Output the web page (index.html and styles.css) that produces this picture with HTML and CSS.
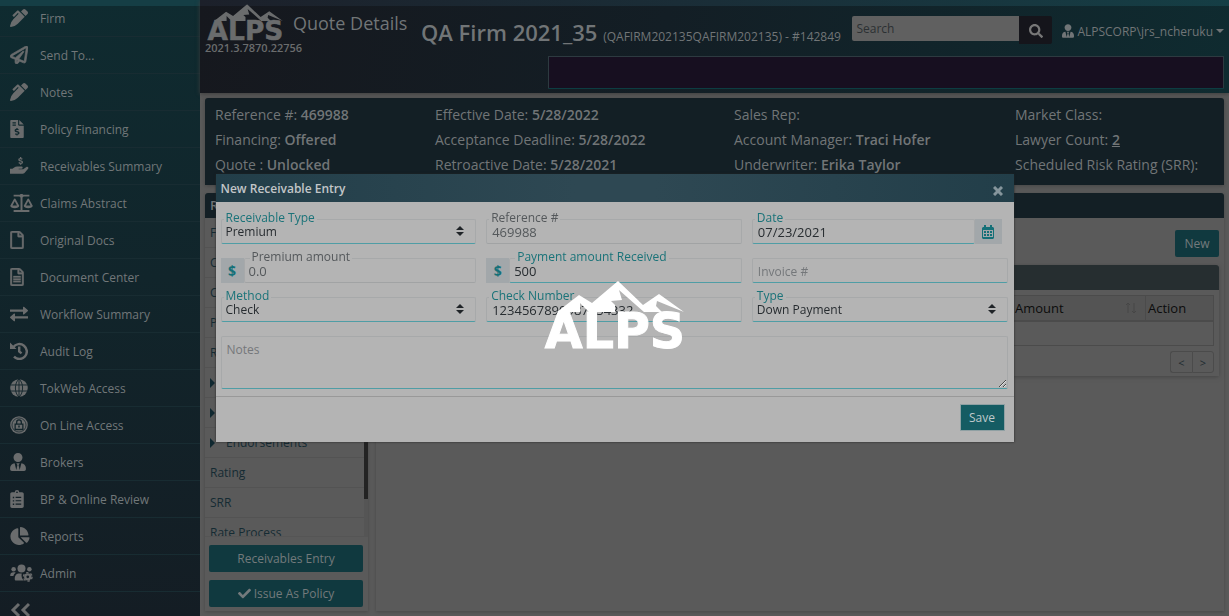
FILE: index.html
```html
<!DOCTYPE html>
<html lang="en">
<head>
<meta charset="utf-8">
<title>Quote Details</title>
<link rel="stylesheet" href="styles.css">
</head>
<body>
<svg class="defs" aria-hidden="true">
  <symbol id="pen" viewBox="0 0 512 512"><path d="M497.94 74.17l-60.11-60.11c-18.75-18.75-49.16-18.75-67.91 0l-56.55 56.55 128.02 128.02 56.55-56.55c18.75-18.75 18.75-49.15 0-67.91zm-246.8-20.53c-15.62-15.62-40.94-15.62-56.56 0L75.8 172.43c-6.25 6.25-6.25 16.38 0 22.62l22.63 22.63c6.25 6.25 16.38 6.25 22.63 0l101.82-101.82 22.63 22.62L93.95 290.03A327.038 327.038 0 0 0 .17 485.11l-.03.23c-1.7 15.28 11.21 28.2 26.49 26.51a327.02 327.02 0 0 0 195.34-93.8l196.79-196.79-82.77-82.77-84.85-84.85z"/></symbol>
  <symbol id="usertie" viewBox="0 0 448 512"><path d="M224 256c70.7 0 128-57.3 128-128S294.7 0 224 0 96 57.3 96 128s57.3 128 128 128zm95.8 32.6L272 480l-32-136 32-56h-96l32 56-32 136-47.8-191.4C56.9 292 0 350.3 0 422.4V464c0 26.5 21.5 48 48 48h352c26.5 0 48-21.5 48-48v-41.6c0-72.1-56.9-130.4-128.2-133.8z"/></symbol>
  <symbol id="peaks" viewBox="0 0 150 31"><path d="M17 31L39 14l13 8L78 0l25 24 16-11 25 18-27-11-1 5 6 6h-18L79 9l3 10-11 1 4 4v7H49l-9-9v9z"/></symbol>
  <symbol id="sort" viewBox="0 0 8 10"><path d="M0 4l4-4 4 4zM0 6h8l-4 4z"/></symbol>
</svg>

<div class="app">
  <nav class="sidebar">
    <a href="#"><svg class="w18"><use href="#pen"/></svg>Firm</a>
    <a href="#"><svg class="w18" viewBox="0 0 512 512"><path stroke="currentColor" stroke-width="20" d="M440 6.5L24 246.4c-34.4 19.9-31.1 70.8 5.7 85.9L144 379.6V464c0 46.4 59.2 65.5 86.6 28.6l43.8-59.1 111.9 46.2c5.9 2.4 12.1 3.6 18.3 3.6 8.2 0 16.3-2.1 23.6-6.2 12.8-7.2 21.6-20 23.9-34.5l59.4-387.2c6.1-40.1-36.9-68.8-71.5-48.9zM192 464v-64.6l36.6 15.1L192 464zm212.6-28.7l-153.8-63.5L391 169.5c10.7-15.5-9.5-33.5-23.7-21.2L155.8 332.6 48 288 464 48l-59.4 387.3z"/></svg>Send To...</a>
    <a href="#"><svg class="w18"><use href="#pen"/></svg>Notes</a>
    <a href="#"><svg class="w14" viewBox="0 0 384 512"><path fill-rule="evenodd" d="M24 0h200v136c0 13 11 24 24 24h136v328c0 13-11 24-24 24H24c-13 0-24-11-24-24V24C0 11 11 0 24 0zm40 64v32h96V64zm0 64v32h96v-32zm112 96v24c-32 2-52 22-52 48 0 62 96 40 96 74 0 24-48 22-66 4l-22 28c12 10 28 16 44 18v24h32v-24c32-4 54-24 54-50 0-62-96-42-96-72 0-20 40-20 60-6l18-28c-10-8-24-14-36-16v-24zM256 0l128 128H256z"/></svg>Policy Financing</a>
    <a href="#"><svg class="w20" viewBox="0 0 576 512"><path d="M0 336h70l50-38c25-18 55-26 86-26h126c45 0 45 64 0 64h-82v16h130l92-68c35-25 79 20 50 52L410 468c-14 10-30 12-44 12H0z"/><path fill="none" stroke="currentColor" stroke-width="38" d="M356 62c-34-26-100-22-100 14 0 48 102 22 102 72 0 40-76 38-106 10M306 0v44M306 178v40"/></svg>Receivables Summary</a>
    <a href="#"><svg class="w23" viewBox="0 0 640 512"><path fill-rule="evenodd" d="M96 24h176a56 56 0 0 1 96 0h176v48H378c-6 12-16 22-30 28v356h196v56H96v-56h196V100c-14-6-24-16-30-28H96zM128 130c14 0 20 8 26 20l102 186c0 44-58 72-128 72S0 380 0 336l102-186c6-12 12-20 26-20zm0 76L64 328h128zm384-76c14 0 20 8 26 20l102 186c0 44-58 72-128 72s-128-28-128-72l102-186c6-12 12-20 26-20zm0 76l-64 122h128z"/></svg>Claims Abstract</a>
    <a href="#"><svg class="w14" viewBox="0 0 384 512"><path stroke="currentColor" stroke-width="10" d="M369.9 97.9L286 14C277 5 264.8 0 252.1 0H48C21.5 0 0 21.5 0 48v416c0 26.5 21.5 48 48 48h288c26.5 0 48-21.5 48-48V131.9c0-12.7-5.1-25-14.1-34zM332.1 128H256V51.9l76.1 76.1zM48 464V48h160v104c0 13.3 10.7 24 24 24h104v288H48z"/></svg>Original Docs</a>
    <a href="#"><svg class="w14" viewBox="0 0 384 512"><path stroke="currentColor" stroke-width="10" d="M369.9 97.9L286 14C277 5 264.8 0 252.1 0H48C21.5 0 0 21.5 0 48v416c0 26.5 21.5 48 48 48h288c26.5 0 48-21.5 48-48V131.9c0-12.7-5.1-25-14.1-34zM332.1 128H256V51.9l76.1 76.1zM48 464V48h160v104c0 13.3 10.7 24 24 24h104v288H48zM88 230h208v42H88zm0 66h208v42H88zm0 66h208v42H88z"/></svg>Document Center</a>
    <a href="#"><svg class="w18" viewBox="0 0 512 512"><path d="M0 128h370V64c0-18 16-22 27-12l106 92c12 10 12 22 0 32l-106 92c-12 10-27 4-27-12v-64H0zM512 320H142v-64c0-18-16-22-27-12L9 336c-12 10-12 22 0 32l106 92c12 10 27 4 27-12v-64h370z"/></svg>Workflow Summary</a>
    <a href="#"><svg class="w18" viewBox="0 0 512 512"><path fill="none" stroke="currentColor" stroke-width="70" d="M92 150a212 212 0 1 1 22 268M262 130v140l66 54"/><path d="M0 12l186 186H0z"/></svg>Audit Log</a>
    <a href="#"><svg class="w18" viewBox="0 0 512 512"><circle cx="256" cy="256" r="250"/><path class="cut" stroke-width="26" d="M0 170h512M0 342h512M256 0v512M256 0C120 110 120 402 256 512M256 0c136 110 136 402 0 512"/></svg>TokWeb Access</a>
    <a href="#"><svg class="w18" viewBox="0 0 512 512"><circle cx="256" cy="256" r="250"/><circle class="cut" stroke-width="20" cx="256" cy="256" r="200"/><path class="cut" stroke-width="36" d="M190 220v-44c0-84 132-84 132 0v44M146 228h220v156H146z"/><path class="cut" stroke-width="40" d="M256 270v60"/></svg>On Line Access</a>
    <a href="#"><svg class="w16"><use href="#usertie"/></svg>Brokers</a>
    <a href="#"><svg class="w14" viewBox="0 0 384 512"><path fill-rule="evenodd" d="M48 64h80a64 64 0 0 1 128 0h80c26 0 48 22 48 48v352c0 26-22 48-48 48H48c-26 0-48-22-48-48V112c0-26 22-48 48-48zm144-24a24 24 0 1 0 0 48 24 24 0 0 0 0-48zM72 192v40h40v-40zm80 0v32h160v-32zM72 288v40h40v-40zm80 0v32h160v-32zM72 384v40h40v-40zm80 0v32h160v-32z"/></svg>BP &amp; Online Review</a>
    <a href="#"><svg class="w20" viewBox="0 0 544 512"><path d="M527.79 288H290.5l158.03 158.03c6.04 6.04 15.98 6.53 22.19.68 38.7-36.46 65.32-85.61 73.13-140.86 1.34-9.46-6.51-17.85-16.06-17.85zm-15.83-64.8C503.72 103.74 408.26 8.28 288.8.04 279.68-.59 272 7.1 272 16.24V240h223.77c9.14 0 16.82-7.68 16.19-16.8zM224 288V50.71c0-9.55-8.39-17.4-17.84-16.06C86.99 51.49-4.1 155.6.14 280.37 4.5 408.51 114.83 513.59 243.03 511.98c50.4-.63 96.97-16.87 135.26-44.03 7.9-5.6 8.42-17.23 1.57-24.08L224 288z"/></svg>Reports</a>
    <a href="#"><svg class="w23" viewBox="0 0 640 512"><circle cx="96" cy="150" r="64"/><circle cx="320" cy="130" r="114"/><circle cx="544" cy="150" r="64"/><path d="M0 320c0-60 30-86 96-86 26 0 46 4 60 12-42 26-60 56-66 96H0zM128 432c0-110 50-160 130-160h70c-20 60 0 150 60 200H168c-26 0-40-16-40-40z"/><circle class="cog" stroke-width="66" cx="498" cy="366" r="72"/><circle class="cog" stroke-width="40" stroke-dasharray="68 60" cx="498" cy="366" r="122"/></svg>Admin</a>
    <a href="#" aria-label="Collapse menu"><svg class="w20" viewBox="0 0 20 18"><path fill="none" stroke="currentColor" stroke-width="3" d="M9 3L3 9l6 6M19 3l-6 6 6 6"/></svg></a>
  </nav>

  <main class="main">
    <header class="topbar">
      <div class="brand">
        <svg class="logo" viewBox="0 0 150 68"><use href="#peaks" width="150" height="31"/><text class="wordmark" x="75" y="67" text-anchor="middle">ALPS</text></svg>
        <span class="version">2021.3.7870.22756</span>
      </div>
      <span class="page-name">Quote Details</span>
      <div class="top-right">
        <div class="top-line">
          <h1>QA Firm 2021_35 <small>(QAFIRM202135QAFIRM202135) - #142849</small></h1>
          <form class="search">
            <input type="text" placeholder="Search" aria-label="Search">
            <button type="button" aria-label="Search"><svg viewBox="0 0 512 512"><path d="M505 442.7L405.3 343c-4.5-4.5-10.6-7-17-7H372c27.6-35.3 44-79.7 44-128C416 93.1 322.9 0 208 0S0 93.1 0 208s93.1 208 208 208c48.3 0 92.7-16.4 128-44v16.3c0 6.4 2.5 12.5 7 17l99.7 99.7c9.4 9.4 24.6 9.4 33.9 0l28.3-28.3c9.4-9.4 9.4-24.6.1-34zM208 336c-70.7 0-128-57.2-128-128 0-70.7 57.2-128 128-128 70.7 0 128 57.2 128 128 0 70.7-57.2 128-128 128z"/></svg></button>
          </form>
          <a class="user" href="#"><svg><use href="#usertie"/></svg>ALPSCORP\jrs_ncheruku<i class="caret"></i></a>
        </div>
        <div class="message-box"></div>
      </div>
    </header>

    <div class="content">
      <section class="summary">
        <div>Reference #: <b>469988</b></div><div>Effective Date: <b>5/28/2022</b></div><div>Sales Rep:</div><div>Market Class:</div>
        <div>Financing: <b>Offered</b></div><div>Acceptance Deadline: <b>5/28/2022</b></div><div>Account Manager: <b>Traci Hofer</b></div><div>Lawyer Count: <a href="#">2</a></div>
        <div>Quote : <b>Unlocked</b></div><div>Retroactive Date: <b>5/28/2021</b></div><div>Underwriter: <b>Erika Taylor</b></div><div>Scheduled Risk Rating (SRR):</div>
      </section>

      <div class="columns">
        <aside class="steps">
          <h2>R</h2>
          <ul>
            <li>F</li><li>C</li><li>C</li><li>P</li><li>R</li>
            <li class="sub"></li><li class="sub"></li><li class="sub">Endorsements</li>
            <li>Rating</li><li>SRR</li><li>Rate Process</li>
          </ul>
          <div class="step-actions">
            <button type="button">Receivables Entry</button>
            <button type="button"><svg viewBox="0 0 512 512"><path d="M173.898 439.404l-166.4-166.4c-9.997-9.997-9.997-26.206 0-36.204l36.203-36.204c9.997-9.998 26.207-9.998 36.204 0L192 312.69 432.095 72.596c9.997-9.997 26.207-9.997 36.204 0l36.203 36.204c9.997 9.997 9.997 26.206 0 36.204l-294.4 294.401c-9.998 9.997-26.207 9.997-36.204-.001z"/></svg>Issue As Policy</button>
          </div>
        </aside>
        <section class="entries">
          <h2></h2>
          <div class="entries-body">
            <button type="button" class="new">New</button>
            <div class="card">
              <h3></h3>
              <table>
                <thead><tr><th></th><th class="amount"><span>Amount<svg viewBox="0 0 12 12"><path d="M3 11V1M1 3l2-2 2 2M9 1v10M7 9l2 2 2-2"/></svg></span></th><th class="action">Action</th></tr></thead>
                <tbody><tr><td colspan="3"></td></tr></tbody>
              </table>
              <div class="pager"><button type="button">&lt;</button><button type="button">&gt;</button></div>
            </div>
          </div>
        </section>
      </div>
    </div>
  </main>
</div>

<div class="overlay">
  <form class="modal" role="dialog" aria-labelledby="dialog-title">
    <header><h2 id="dialog-title">New Receivable Entry</h2><button type="button" aria-label="Close"><svg viewBox="0 0 10 10"><path d="M1 1l8 8M9 1L1 9"/></svg></button></header>
    <div class="fields">
      <div class="field"><label for="rtype">Receivable Type</label><select id="rtype"><option>Premium</option></select><svg class="sort"><use href="#sort"/></svg></div>
      <div class="field locked"><label for="ref">Reference #</label><input id="ref" type="text" value="469988" readonly></div>
      <div class="field date"><label for="date">Date</label><input id="date" type="text" value="07/23/2021"><button type="button" class="addon" aria-label="Pick a date"><svg viewBox="0 0 12 14"><path fill-rule="evenodd" d="M2 0h2v2h4V0h2v2h1l1 1v10l-1 1H1l-1-1V3l1-1h1zM1 5v7h10V5zm1 1h2v2H2zm3 0h2v2H5zm3 0h2v2H8zM2 9h2v2H2zm3 0h2v2H5zm3 0h2v2H8z"/></svg></button></div>
      <div class="field money locked"><span class="addon">$</span><label for="premium">Premium amount</label><input id="premium" type="text" value="0.0" readonly></div>
      <div class="field money"><span class="addon">$</span><label for="payment">Payment amount Received</label><input id="payment" type="text" value="500"></div>
      <div class="field"><input type="text" placeholder="Invoice #" aria-label="Invoice #"></div>
      <div class="field"><label for="method">Method</label><select id="method"><option>Check</option></select><svg class="sort"><use href="#sort"/></svg></div>
      <div class="field"><label for="check">Check Number</label><input id="check" type="text" value="1234567890987654332"></div>
      <div class="field"><label for="type">Type</label><select id="type"><option>Down Payment</option></select><svg class="sort"><use href="#sort"/></svg></div>
      <textarea placeholder="Notes" aria-label="Notes"></textarea>
    </div>
    <footer><button type="button">Save</button></footer>
  </form>
</div>
<div class="overlay loading"><svg viewBox="0 0 150 68"><use href="#peaks" width="150" height="31"/><text class="wordmark" x="75" y="67" text-anchor="middle">ALPS</text></svg></div>
</body>
</html>
```
FILE: styles.css
```css
* { box-sizing: border-box; }
body, button, input, select, textarea {
  font-family: "Open Sans", "Noto Sans", sans-serif;
  font-size: 12px;
}
body { margin: 0; background: #5a5a5a; color: #717577; overflow: hidden; }
h1, h2, h3, ul { margin: 0; padding: 0; font-size: 13px; }
a { color: inherit; text-decoration: none; }
button { border: 0; padding: 0; }
svg { fill: currentColor; flex: none; }
.defs { position: absolute; width: 0; height: 0; }
.wordmark { font: bold 49px "DejaVu Sans", sans-serif; stroke: currentColor; stroke-width: 1px; }

.app { display: flex; height: 100vh; }

.sidebar {
  flex: 0 0 200px;
  overflow: hidden;
  position: relative;
  background: linear-gradient(#0f2b30, #11252b 45%, #141d24);
}
.sidebar::before, .topbar::before {
  content: "";
  position: absolute;
  inset: 0 0 auto;
  height: 6px;
  background: #153e45;
}
.sidebar a {
  display: grid;
  grid-template-columns: 30px 1fr;
  align-items: center;
  height: 37px;
  padding-left: 10px;
  border-bottom: 1px solid #182c32;
  color: #717779;
  position: relative;
}
.sidebar svg { height: 18px; color: #6a6c6d; }
.w14 { width: 14px; }
.w16 { width: 16px; }
.w18 { width: 18px; }
.w20 { width: 20px; }
.w23 { width: 23px; }
.cut { fill: none; stroke: #12242b; }
.cog { fill: none; stroke: currentColor; }

.main { flex: 1; min-width: 0; display: flex; flex-direction: column; }
.topbar {
  position: relative;
  display: flex;
  height: 93px;
  padding: 4px 5px;
  background: linear-gradient(100deg, #16181e, #131e25 45%, #0f2b30);
  box-shadow: 0 1px 4px #3d3d3d;
}
.topbar::before { background: linear-gradient(90deg, #1c202a, #1a2e38 50%, #153e45); }
.brand { position: relative; flex: 0 0 88px; min-width: 0; color: #6a6c6d; }
.logo { display: block; width: 81px; height: 37px; }
.version { display: block; font-size: 11px; line-height: 14px; font-weight: 600; white-space: nowrap; }
.page-name { position: relative; flex: 0 0 111px; min-width: 0; font-size: 18px; line-height: 39px; white-space: nowrap; }
.top-right { flex: 1; min-width: 0; padding-left: 17px; position: relative; }
.top-line { display: flex; align-items: flex-start; height: 52px; padding-top: 12px; white-space: nowrap; }
h1 { flex: 1; min-width: 0; font-size: 22px; line-height: 32px; font-weight: 600; }
h1 small { font-size: 12px; font-weight: 400; }
.search { display: flex; align-items: flex-start; flex: 0 0 200px; }
.search input {
  width: 167px;
  height: 25px;
  padding: 0 4px;
  border: 0;
  border-radius: 2px 0 0 2px;
  background: #606060;
}
.search input::placeholder { color: #2c3033; }
.search button { width: 33px; height: 28px; background: #15151b; color: #777; border-radius: 0 2px 2px 0; }
.search button svg { width: 14px; height: 14px; vertical-align: middle; }
.user { display: flex; align-items: center; gap: 3px; height: 30px; padding-left: 10px; }
.user svg { width: 12px; height: 14px; }
.caret { border: 4px solid transparent; border-top-color: currentColor; border-bottom: 0; }
.message-box {
  height: 33px;
  margin-left: 127px;
  background: #170f20;
  border: 1px solid #2d3a40;
  border-bottom-color: #0d3d42;
  border-radius: 1px;
}

.content { flex: 1; min-height: 0; display: flex; flex-direction: column; gap: 8px; padding: 5px; }
.summary {
  display: grid;
  grid-template-columns: 220fr 299fr 281fr 199fr;
  padding: 4px 10px 8px;
  line-height: 25px;
  font-size: 14px;
  white-space: nowrap;
  background: #131f25;
  border-radius: 3px 3px 0 0;
  box-shadow: 0 1px 4px #444;
}
.summary b, .summary a { font-weight: 600; }
.summary a { text-decoration: underline; }
.columns { flex: 1; min-height: 0; display: flex; gap: 8px; }
.steps, .entries { display: flex; flex-direction: column; box-shadow: 0 1px 3px #484848; }
.steps { width: 163px; }
.entries { flex: 1; }
h2 { font-weight: 600; }
.steps h2, .entries h2 {
  height: 25px;
  padding: 0 5px;
  line-height: 25px;
  background: #131f25;
  border-radius: 3px 3px 0 0;
}
.steps ul {
  flex: 1;
  min-height: 0;
  overflow: hidden;
  list-style: none;
  font-size: 12px;
  color: #152b33;
  border-bottom: 1px solid #484848;
  border-right: 4px solid #555;
  border-image: linear-gradient(#232323 88%, #555 88%) 0 4 1 0;
}
.steps li { height: 30px; padding: 0 5px; line-height: 30px; border-bottom: 1px solid #535353; }
.steps .sub { display: flex; align-items: center; gap: 11px; }
.sub::before { content: ""; border: 5px solid transparent; border-left-color: #102830; border-right: 0; }
.step-actions { display: grid; gap: 8px; padding: 8px 5px 4px 4px; }
.step-actions button, .new { height: 27px; background: #10393f; color: #737a7c; border-radius: 2px; }
.step-actions svg { width: 13px; height: 13px; margin-right: 3px; vertical-align: -2px; }
.entries-body { padding: 12px 5px; display: flex; flex-direction: column; gap: 8px; }
.new { align-self: flex-end; width: 44px; }
.card { box-shadow: 0 1px 4px #464646; padding-bottom: 3px; }
h3 { height: 25px; background: #262e30; border-radius: 3px 3px 0 0; }
.card table { width: calc(100% - 10px); margin: 5px 5px 3px; border-collapse: collapse; color: #0c0c0c; font-size: 13px; }
.card th, .card td { height: 25px; padding: 0 2px; border: 1px solid #4b4b4b; text-align: left; font-weight: 500; }
.card th { background: #545454; border-bottom-width: 2px; }
.amount { width: 133px; }
.action { width: 68px; }
.amount span { display: flex; justify-content: space-between; align-items: center; padding-right: 6px; }
.amount svg { width: 12px; height: 12px; fill: none; stroke: #464646; }
.pager { display: flex; justify-content: flex-end; padding: 2px 5px 0; }
.pager button { width: 22px; height: 22px; background: none; border: 1px solid #4b4b4b; color: #202a30; font-size: 11px; border-radius: 0 3px 3px 0; }
.pager button:first-child { border-right: 0; border-radius: 3px 0 0 3px; }

.overlay { position: fixed; inset: 0; display: grid; place-items: center; }
.modal { width: 90%; max-width: 798px; background: #b4b4b4; box-shadow: 0 0 2px #222; color: #272c30; }
.modal > header {
  display: flex;
  justify-content: space-between;
  align-items: center;
  height: 28px;
  padding: 0 11px 0 5px;
  color: #c2c6c8;
  background: linear-gradient(90deg, #223e49, #2e4853 45%, #2e4853 55%, #223e49);
}
.modal h2 { font-size: 12px; }
.modal header button { width: 10px; height: 18px; background: none; color: #85959c; }
.modal header svg { display: block; margin-top: 5px; width: 10px; height: 10px; stroke: currentColor; stroke-width: 3px; }
.fields { display: grid; grid-template-columns: repeat(3, 1fr); gap: 14px 10px; padding: 17px 6px 7px 5px; }
.field { position: relative; display: flex; height: 25px; }
.field input, .field select, .fields textarea {
  flex: 1;
  min-width: 0;
  height: 25px;
  margin: 0;
  padding: 0 5px;
  color: #272c30;
  background: #b4b4b4;
  border: 1px solid #a7a9aa;
  border-bottom: 1px solid #4f9da5;
  border-radius: 2px;
  appearance: none;
  outline: 0;
}
.field input { font-size: 13px; }
.field select { padding: 0 4px; }
.field label {
  position: absolute;
  top: -9px;
  left: 3px;
  padding: 0 2px;
  line-height: 15px;
  background: #b4b4b4;
  color: #1a7379;
}
.field.locked input { color: #54585b; border-bottom-color: #a1a3a4; }
.field.locked label { color: #54585b; }
.field.money label { left: 29px; }
.field.money input { padding-left: 4px; }
.addon {
  width: 23px;
  display: grid;
  place-items: center;
  background: #a2a7aa;
  color: #147078;
  font-size: 14px;
  font-weight: 700;
}
.date { padding-right: 6px; }
.date .addon { width: 27px; }
.addon svg { width: 12px; height: 14px; }
.sort { position: absolute; right: 12px; top: 7px; width: 8px; height: 10px; color: #202428; }
.fields textarea { grid-column: 1 / -1; height: 53px; padding-top: 4px; resize: vertical; }
.fields ::placeholder { color: #74777a; font-size: 12px; }
.modal footer { display: flex; justify-content: flex-end; padding: 7px 9px 11px; border-top: 1px solid #999; }
.modal footer button { width: 45px; height: 27px; background: #155c63; color: #bfc9cb; border: 1px solid #8fa0a3; }

.loading { padding-top: 13px; color: #fff; pointer-events: none; }
.loading svg { width: 150px; height: 68px; }
```
